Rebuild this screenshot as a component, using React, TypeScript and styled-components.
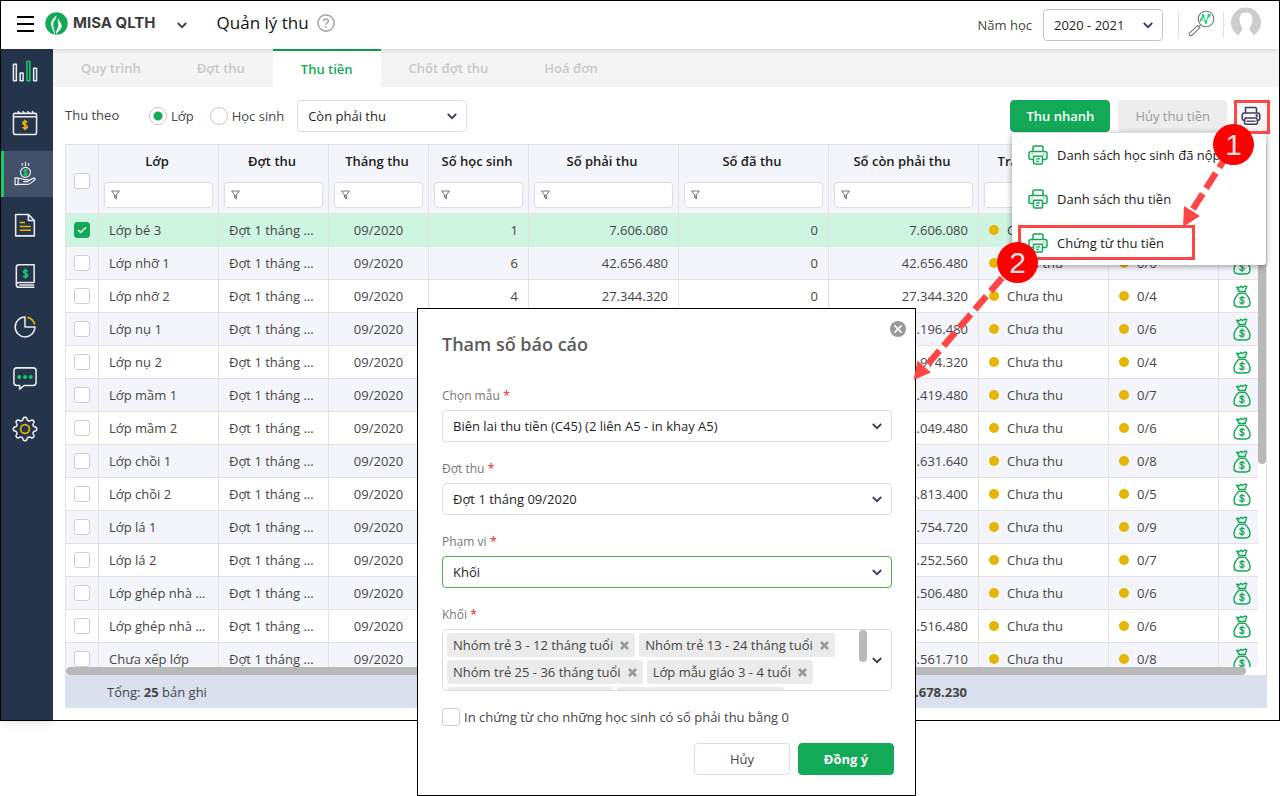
import React from "react";
import styled, { createGlobalStyle, css } from "styled-components";

const GREEN = "#12a957";
const GOLD = "#e5b500";
const RED = "#ff4646";
const LINE = "#e3e3e6";

const GlobalStyle = createGlobalStyle`
  *, *::before, *::after { box-sizing: border-box; }
  body { margin: 0; background: #fff; }
  body, button, input, select { font-family: "Open Sans", "Noto Sans", sans-serif; font-size: 13px; color: #454545; }
  button { cursor: pointer; }
`;

const Page = styled.div`
  position: relative;
  min-height: 796px;
`;

const AppFrame = styled.div`
  border: 1px solid #000;
  display: flex;
  flex-direction: column;
`;

const Header = styled.header`
  height: 48px;
  display: flex;
  align-items: center;
  background: #fff;
  position: relative;
  z-index: 1;
  box-shadow: 0 1px 6px rgba(0, 0, 0, 0.14);
  padding: 0 17px 4px 16px;
`;

const IconButton = styled.button`
  border: 0;
  padding: 0;
  background: none;
  display: flex;
  align-items: center;
  justify-content: center;
`;

const Brand = styled.a`
  display: flex;
  align-items: center;
  gap: 5px;
  margin-left: 11px;
  color: #3b3b3f;
  text-decoration: none;
  font: 700 15px/20px Inter, sans-serif;
`;

const BrandToggle = styled(IconButton)`
  width: 16px;
  height: 20px;
  margin: 3px 0 0 18px;
`;

const PageTitle = styled.h1`
  margin: 0 8px 0 27px;
  font-size: 17px;
  line-height: 24px;
  font-weight: 400;
  color: #111;
`;

const Spacer = styled.div`
  flex: 1;
`;

const YearLabel = styled.label`
  display: flex;
  align-items: center;
  gap: 11px;
  padding-top: 4px;
`;

const SelectBox = styled.div<{ $width?: string; $active?: boolean; $strong?: boolean }>`
  position: relative;
  width: ${(p) => p.$width ?? "100%"};
  height: 32px;
  svg { position: absolute; right: 9px; top: 11px; pointer-events: none; }
  select {
    appearance: none;
    width: 100%;
    height: 32px;
    padding: 0 28px 0 10px;
    border: 1px solid ${(p) => (p.$active ? "#4cb04f" : p.$strong ? "#c4c4c4" : "#dedede")};
    border-radius: 4px;
    background: #fff;
    color: #1f1f1f;
  }
`;

const Tools = styled.div`
  display: flex;
  align-items: center;
  margin-left: 15px;
`;

const ToolButton = styled(IconButton)`
  margin: 0 8px 0 9px;
`;

const AccountButton = styled(IconButton)`
  margin-left: 6px;
`;

const HeaderDivider = styled.span`
  width: 1px;
  height: 26px;
  background: #e2e2e2;
  margin-top: 4px;
`;

const Body = styled.div`
  display: flex;
`;

const Sidebar = styled.nav`
  width: 52px;
  background: #24344b;
  display: flex;
  flex-direction: column;
  gap: 5px;
  box-shadow: 0 0 10px rgba(0, 0, 0, 0.2);
`;

const SideLink = styled.a<{ $active?: boolean }>`
  height: 46px;
  display: flex;
  align-items: center;
  justify-content: center;
  padding-right: 7px;
  border-left: 3px solid ${(p) => (p.$active ? "#12cf63" : "transparent")};
  ${(p) => p.$active && css`background: #42506a;`}
`;

const Main = styled.main`
  flex: 1;
  min-width: 0;
  background: #fff;
`;

const Tabs = styled.div`
  display: flex;
  height: 38px;
  background: #f4f4f4;
`;

const Tab = styled.a<{ $active?: boolean }>`
  padding: 1px 28px 0;
  line-height: 36px;
  font-weight: 600;
  text-decoration: none;
  color: #c8c8c8;
  ${(p) =>
    p.$active &&
    css`
      padding-top: 0;
      color: ${GREEN};
      background: #fff;
      border-top: 2px solid ${GREEN};
    `}
`;

const Toolbar = styled.div`
  height: 57px;
  padding: 13px 12px 0;
  display: flex;
  align-items: flex-start;
`;

const ToolbarText = styled.span`
  width: 84px;
  line-height: 30px;
`;

const RadioLabel = styled.label`
  display: flex;
  align-items: center;
  gap: 4px;
  height: 32px;
  margin-right: 16px;
  input {
    appearance: none;
    width: 18px;
    height: 18px;
    margin: 0;
    border: 1px solid #c9c9c9;
    border-radius: 50%;
    background: #fff;
  }
  input:checked { background: radial-gradient(circle, ${GREEN} 4px, #fff 5px); }
  & + div { margin-left: -3px; }
`;

const Button = styled.button<{ $kind: "primary" | "muted" | "plain" }>`
  height: 32px;
  min-width: 100px;
  padding: 0 ${(p) => (p.$kind === "primary" ? 15 : 16)}px;
  border-radius: 4px;
  border: 1px solid ${(p) => (p.$kind === "primary" ? GREEN : p.$kind === "muted" ? "#ededed" : "#dedede")};
  background: ${(p) => (p.$kind === "primary" ? GREEN : p.$kind === "muted" ? "#ededed" : "#fff")};
  color: ${(p) => (p.$kind === "primary" ? "#fff" : p.$kind === "muted" ? "#9b9b9b" : "#454545")};
  font-weight: ${(p) => (p.$kind === "primary" ? 600 : 400)};
`;

const ToolbarActions = styled.div`
  display: flex;
  gap: 8px;
`;

const PrintButton = styled(IconButton)`
  width: 32px;
  height: 32px;
  border-radius: 4px;
  background: #f7f7fa;
`;

const Grid = styled.section`
  margin: 0 12px 12px;
`;

const GridView = styled.div`
  display: flex;
  border: 1px solid ${LINE};
  border-bottom: 0;
  height: 531px;
`;

const TableArea = styled.div`
  flex: 1;
  min-width: 0;
  display: flex;
  flex-direction: column;
`;

const TableClip = styled.div`
  flex: 1;
  min-height: 0;
  overflow: hidden;
`;

const HTrack = styled.div`
  height: 8px;
`;

const HThumb = styled.div`
  width: 99%;
  height: 8px;
  border-radius: 4px;
  background: #b9b9b9;
`;

const VTrack = styled.div`
  width: 8px;
  padding-top: 69px;
`;

const VThumb = styled.div`
  height: 250px;
  border-radius: 4px;
  background: #b9b9b9;
`;

const Table = styled.table`
  width: 100%;
  min-width: 1203px;
  table-layout: fixed;
  border-collapse: separate;
  border-spacing: 0;
  th, td {
    padding: 0 10px;
    border-right: 1px solid ${LINE};
    border-bottom: 1px solid ${LINE};
    font-weight: 400;
    white-space: nowrap;
    overflow: hidden;
    text-overflow: ellipsis;
  }
  th { height: 69px; padding: 6px 5px 5px; background: #f4f5fa; color: #1c1c1c; font-weight: 600; }
  th:first-child, td:first-child { padding: 0; text-align: center; }
  th:first-child { padding-top: 4px; }
  th:last-child, td:last-child { padding: 0; text-align: center; text-overflow: clip; }
`;

const Row = styled.tr<{ $selected?: boolean }>`
  height: 33px;
  background: #fff;
  &:nth-child(even) { background: #f4f5fa; }
  ${(p) => p.$selected && css`&& { background: #cdf5e1; }`}
`;

const Cell = styled.td<{ $align?: string }>`
  text-align: ${(p) => p.$align ?? "left"};
`;

const Check = styled.input<{ $size?: number }>`
  appearance: none;
  display: inline-block;
  vertical-align: middle;
  flex: none;
  width: ${(p) => p.$size ?? 16}px;
  height: ${(p) => p.$size ?? 16}px;
  margin: 0;
  border: 1px solid #cfcfcf;
  border-radius: 3px;
  background: #fff;
  &:checked { background: ${GREEN}; border-color: ${GREEN}; }
`;

const CheckWrap = styled.span`
  position: relative;
  display: flex;
  justify-content: center;
  svg { position: absolute; left: 50%; top: 50%; translate: -50% -50%; pointer-events: none; }
`;

const HeadCell = styled.div`
  display: flex;
  flex-direction: column;
  align-items: stretch;
  gap: 11px;
  text-align: center;
  line-height: 20px;
`;

const HeadTitle = styled.span`
  padding-right: 3px;
`;

const Filter = styled.span`
  display: flex;
  align-items: center;
  height: 26px;
  padding-left: 6px;
  border: 1px solid #dfdfe2;
  border-radius: 4px;
  background: #fff;
  input { flex: 1; min-width: 0; border: 0; outline: 0; background: none; padding: 0 4px; }
`;

const Status = styled.span`
  display: flex;
  align-items: center;
  gap: 8px;
  &::before { content: ""; width: 10px; height: 10px; border-radius: 50%; background: ${GOLD}; }
`;

const BagButton = styled(IconButton)`
  width: 46px;
  height: 31px;
`;

const Summary = styled.footer`
  height: 33px;
  background: #dae0ed;
  display: flex;
  align-items: center;
  padding-left: 42px;
  span { width: 586px; }
  strong { font-weight: 700; }
  > strong { width: 274px; text-align: right; }
`;

const Menu = styled.ul`
  position: absolute;
  top: 133px;
  right: 14px;
  z-index: 2;
  width: 254px;
  margin: 0;
  padding: 0;
  list-style: none;
  background: #fff;
  border-radius: 3px;
  box-shadow: 0 1px 6px rgba(0, 0, 0, 0.4);
`;

const MenuItem = styled.button`
  width: 100%;
  height: 44px;
  padding: 0 16px;
  border: 0;
  background: none;
  display: flex;
  align-items: center;
  gap: 9px;
  color: #1c1c1c;
  white-space: nowrap;
`;

const Dialog = styled.section`
  position: absolute;
  left: 417px;
  top: 308px;
  z-index: 3;
  width: 499px;
  padding: 22px 23px 20px 24px;
  border: 1px solid #000;
  background: #fff;
`;

const CloseButton = styled(IconButton)`
  position: absolute;
  top: 12px;
  right: 9px;
`;

const DialogTitle = styled.h2`
  margin: 0 0 29px;
  font-size: 18px;
  line-height: 26px;
  font-weight: 600;
  color: #5c5c5c;
`;

const Field = styled.div`
  margin-bottom: 17px;
  > label {
    display: block;
    height: 24px;
    line-height: 18px;
    font-size: 12px;
    color: #777;
  }
`;

const Required = styled.span`
  color: #f5222d;
  font-size: 13px;
`;

const TagBox = styled.div`
  height: 62px;
  border: 1px solid #dedede;
  border-radius: 4px;
  display: flex;
  overflow: hidden;
`;

const TagList = styled.div`
  flex: 1;
  display: flex;
  flex-wrap: wrap;
  align-content: flex-start;
  gap: 3px 4px;
  padding: 3px 4px;
`;

const Tag = styled.span`
  height: 24px;
  padding: 0 6px;
  display: flex;
  align-items: center;
  gap: 7px;
  background: #ebebeb;
  border-radius: 3px;
`;

const TagThumb = styled.div`
  width: 8px;
  height: 32px;
  border-radius: 4px;
  background: #b9b9b9;
`;

const TagToggle = styled(IconButton)`
  width: 24px;
  padding-right: 4px;
`;

const CheckLabel = styled.label`
  display: flex;
  align-items: center;
  gap: 4px;
  height: 18px;
`;

const DialogActions = styled.div`
  display: flex;
  justify-content: flex-end;
  gap: 8px;
  margin: 17px -2px 0 0;
  button { width: 96px; min-width: 0; }
  button:last-child { font-weight: 700; }
`;

const Highlight = styled.div<{ $box: "print" | "item" }>`
  position: absolute;
  z-index: 4;
  border: 3px solid ${RED};
  pointer-events: none;
  ${(p) =>
    p.$box === "print"
      ? css`top: 100px; right: 10px; width: 36px; height: 34px;`
      : css`top: 225px; right: 85px; width: 177px; height: 35px;`}
`;

const Arrows = styled.svg`
  position: absolute;
  top: 0;
  right: 0;
  z-index: 4;
  pointer-events: none;
`;

const Step = styled.div<{ $n: 1 | 2 }>`
  position: absolute;
  z-index: 5;
  width: 41px;
  height: 41px;
  border-radius: 50%;
  background: #fe0000;
  color: #e6e0e0;
  font: 30px/41px "Liberation Sans", Arial, sans-serif;
  text-align: center;
  ${(p) => (p.$n === 1 ? css`top: 124px; right: 26px;` : css`top: 242px; right: 242px;`)}
`;

const Chevron = () => (
  <svg width="12" height="10" viewBox="0 0 12 10" fill="none" stroke="#3f3d56" strokeWidth="1.8" aria-hidden>
    <path d="M1.8 3 L6 7.2 L10.2 3" />
  </svg>
);

const Funnel = () => (
  <svg width="9" height="10" viewBox="0 0 9 10" aria-hidden>
    <path d="M.6 1H8.4L5.5 4.8V8.8L3.5 7.4V4.8Z" fill="none" stroke="#66637a" strokeWidth=".9" />
    <path d="M4.8 4.6V8.6" stroke="#8a889a" />
  </svg>
);

const Tick = () => (
  <svg width="10" height="8" viewBox="0 0 10 8" fill="none" stroke="#fff" strokeWidth="1.4" aria-hidden>
    <path d="M1 4 L3.6 6.6 L9 1.2" />
  </svg>
);

const Printer = ({ color }: { color: string }) => (
  <svg width="20" height="20" viewBox="0 0 20 20" fill="none" stroke={color} strokeWidth="1.5" strokeLinejoin="round" aria-hidden>
    <path d="M5 6.5V2.2Q5 1 6.2 1H13.8Q15 1 15 2.2V6.5" />
    <path d="M5 14.5H3Q1 14.5 1 12.5V8.5Q1 6.5 3 6.5H17Q19 6.5 19 8.5V12.5Q19 14.5 17 14.5H15" />
    <path d="M5.5 11.2H14.5V18Q14.5 19 13.5 19H6.5Q5.5 19 5.5 18Z" />
    <path d="M8 13.8H12M8 16.3H11M3.5 9H4.8M15 9H16.5" strokeWidth="1.2" />
  </svg>
);

const PrinterDark = () => (
  <svg width="20" height="20" viewBox="0 0 20 20" fill="none" stroke="#3f3d56" strokeWidth="1.5" strokeLinejoin="round" aria-hidden>
    <path d="M4.5 7V2Q4.5 1.5 5 1.5H14.5L15.5 2.5V7" />
    <path d="M4 14.5H2.5L1.2 12.8V9.2Q1.2 7 3.4 7H16.6Q18.8 7 18.8 9.2V12.8L17.5 14.5H16" />
    <path d="M4.2 12H15.8L16.6 17L15.4 18.3H4.6L3.4 17Z" />
    <path d="M5.5 15.2H14.5" strokeWidth="1.3" />
    <circle cx="15.8" cy="9.6" r=".6" />
  </svg>
);

const Bag = () => (
  <svg width="18" height="23" viewBox="0 0 18 23" fill="none" stroke={GREEN} strokeWidth="1.4" strokeLinejoin="round" strokeLinecap="round" aria-hidden>
    <path d="M6 6.2 3.6 2.2 6.4 2.8 8 1.2 9.6 2.6 12 1 13.8 1.6 12 6.2" />
    <path d="M5.6 6.4H12.4M6 8.2C3 11 1 14 1 17.5C1 20.6 3 22 5.4 22H12.6C15 22 17 20.6 17 17.5C17 14 15 11 12 8.2Z" />
    <path d="M11.3 13.2C10.8 11.8 6.9 11.6 6.9 13.6C6.9 15.6 11.3 14.8 11.3 16.9C11.3 19 7.2 18.8 6.7 17.2M9 11V19.6" strokeWidth="1.2" />
  </svg>
);

const Logo = () => (
  <svg width="23" height="23" viewBox="0 0 23 23" aria-hidden>
    <circle cx="11.5" cy="11.5" r="11.2" fill={GREEN} />
    <path d="M11.4 3.6C7.2 7 5.6 9.8 6.2 13C6.6 16 8.6 18 9.2 22.2H9.9C9.8 17.4 7.6 14.4 8.4 11C9 8.6 11.4 7.2 11.4 3.6Z" fill="#fff" />
    <path d="M13.2 6C13.1 9.2 17.2 10.6 16.6 14.6C16 18.2 12.6 19 11.2 22.8C10.2 18.2 13.6 16.4 13.4 12.8C13.2 10.4 12.2 8.6 13.2 6Z" fill="#fff" />
  </svg>
);

const Help = () => (
  <svg width="18" height="18" viewBox="0 0 18 18" fill="none" stroke="#a9a9a9" strokeWidth="1.6" aria-hidden>
    <circle cx="9" cy="9" r="8.1" />
    <path d="M6.6 7.2C6.7 4.2 11.4 4.4 11.3 7.1C11.2 8.8 9.1 8.8 9.1 10.7M9.1 12V13.7" />
  </svg>
);

const Magnifier = () => (
  <svg width="27" height="27" viewBox="0 0 27 27" fill="none" stroke="#77777d" strokeWidth="1.1" aria-hidden>
    <circle cx="18" cy="9" r="7.8" />
    <path d="M12.6 14.8 10.8 16.6M9.4 15.6 1.6 23Q.6 24.4 1.8 25.4Q3 26.4 4.2 25.2L11.8 17.8Z" />
    <path d="M11.6 11.6 13.6 9 15 5.6 17.8 12.4 20.4 6.4 22.4 5" stroke="#1fd277" strokeWidth="1.4" strokeDasharray="3 .6" />
    <g fill="#1fd277" stroke="none">
      <circle cx="13.4" cy="9.2" r="1.2" /><circle cx="15" cy="5.2" r="1.2" /><circle cx="18" cy="12.6" r="1.3" /><circle cx="21" cy="5.4" r="1.6" />
    </g>
  </svg>
);

const Avatar = () => (
  <svg width="32" height="32" viewBox="0 0 32 32" aria-hidden>
    <circle cx="16" cy="15.5" r="15" fill="#cdcdcd" />
    <path d="M16 5.5C20.8 5.5 22.8 8.8 22.4 13.2C22.2 17 20.6 19 19.8 20.6C19.2 22.4 19.8 23.8 21.4 25L23.6 28.4C19 32.6 13 32.6 8.4 28.4L10.6 25C12.2 23.8 12.8 22.4 12.2 20.6C11.4 19 9.8 17 9.6 13.2C9.2 8.8 11.2 5.5 16 5.5Z" fill="#fff" />
    <path d="M10.8 26.6 Q9 28.4 8 31H24Q23 28.4 21.2 26.6Z" fill="#fff" />
  </svg>
);

const W = "#e9ecf0";
const G = "#12cf63";

/* Outline of a cog: eight rounded teeth around the centre of a 27px box. */
const cogPoints = Array.from({ length: 96 }, (_, i) => {
  const angle = (i / 96) * Math.PI * 2;
  const wave = Math.cos(8 * angle);
  const radius = 10.7 + 1.5 * Math.sign(wave) * Math.sqrt(Math.abs(wave));
  return `${(13.5 + radius * Math.cos(angle)).toFixed(2)},${(13.5 + radius * Math.sin(angle)).toFixed(2)}`;
}).join(" ");

const sideIcons: { label: string; art: React.ReactNode }[] = [
  { label: "Tổng quan", art: (
    <>
      <path d="M1.5 5.5H4.5V22.5H1.5ZM8.5 14.5H11.5V22.5H8.5ZM22.5 9.5H25.5V22.5H22.5Z" />
      <path d="M15.5 2.5H18.5V22.5H15.5Z" stroke={G} />
    </>
  ) },
  { label: "Đợt thu", art: (
    <>
      <path d="M3 3.5H24Q25.5 3.5 25.5 5V23Q25.5 25.5 23 25.5H4Q1.5 25.5 1.5 23V5Q1.5 3.5 3 3.5ZM1.5 7H25.5" />
      <path d="M6 1.2 8.4 3.8M11 1.2 13.4 3.8M16 1.2 18.4 3.8M21 1.2 22.4 3.8" />
      <path d="M15.8 13C15.4 11.2 11.2 11.2 11.2 13.4C11.2 15.8 15.9 14.8 15.9 17.4C15.9 19.6 11.5 19.6 11.1 17.6M13.5 10V21" stroke="#f0b400" />
    </>
  ) },
  { label: "Thu tiền", art: (
    <>
      <circle cx="14" cy="11.8" r="5.2" strokeWidth="1.3" />
      <path d="M15.6 10.2C15.2 8.6 12.4 8.8 12.5 10.4C12.6 12 15.6 11.6 15.6 13.4C15.6 15 12.6 15 12.3 13.6M14 8V15.8" stroke={G} strokeWidth="1.5" />
      <path d="M14 .8V5.2M10.8 2.2V5M17.2 2.2V5" strokeWidth="1.2" />
      <path d="M3.2 17.5H6.4V24.5H3.2ZM6.4 18.4C9.4 17.2 11 18.2 12.4 19.4H16C17.4 19.8 17 21.4 15.8 21.4H11.8M17 20.4 22.4 17.8C24 17.4 24.6 18.8 23.4 19.8C20.6 22 19 24 16.4 24.4H6.4" strokeWidth="1.3" />
    </>
  ) },
  { label: "Chứng từ", art: (
    <>
      <path d="M3.8 2.5H17L23.2 8.8V24.8H3.8Z M17 2.5V8.8H23.2" />
      <path d="M8 11H13.5M8 15H19.5M8 19H19.5" stroke="#f0b400" />
    </>
  ) },
  { label: "Sổ sách", art: (
    <>
      <path d="M23 20.5V1.8H7Q4.5 1.8 4.5 4.3V22.5Q4.5 25.2 7 25.2H23.2M4.5 22.5Q4.8 20.2 7 20.2H23.2M7.5 22.8H23" />
      <path d="M16.2 8.8C15.8 7 12 7 12 9.2C12 11.4 16.3 10.4 16.3 12.8C16.3 15 12.2 15 11.8 13.2M14 5.8V16.2" stroke={G} />
    </>
  ) },
  { label: "Báo cáo", art: (
    <>
      <path d="M13.5 3.2A10.3 10.3 0 1 0 23.9 13.6H13.5Z" />
      <path d="M16 3.3A10.6 10.6 0 0 1 23.6 11" stroke="#f0b400" />
    </>
  ) },
  { label: "Tin nhắn", art: (
    <>
      <path d="M5 3H22Q25 3 25 6V18Q25 21.3 22 21.3H12.6L8 25V21.3H5Q2 21.3 2 18V6Q2 3 5 3Z" />
      <g fill={G} stroke="none">
        <circle cx="7.5" cy="12.5" r="2.1" /><circle cx="13.5" cy="12.5" r="2.1" /><circle cx="19.5" cy="12.5" r="2.1" />
      </g>
    </>
  ) },
  { label: "Thiết lập", art: (
    <>
      <polygon points={cogPoints} />
      <circle cx="13.5" cy="13.5" r="4.6" stroke="#e3b100" strokeWidth="1.8" />
    </>
  ) },
];

const columns: { title: string; width: number; plain?: boolean }[] = [
  { title: "Lớp", width: 120 },
  { title: "Đợt thu", width: 110 },
  { title: "Tháng thu", width: 100 },
  { title: "Số học sinh", width: 100 },
  { title: "Số phải thu", width: 150 },
  { title: "Số đã thu", width: 150 },
  { title: "Số còn phải thu", width: 150 },
  { title: "Trạng thái thu", width: 130, plain: true },
  { title: "Đã thu", width: 110, plain: true },
];

const rows: [string, number, string][] = [
  ["Lớp bé 3", 1, "7.606.080"],
  ["Lớp nhỡ 1", 6, "42.656.480"],
  ["Lớp nhỡ 2", 4, "27.344.320"],
  ["Lớp nụ 1", 6, "41.196.480"],
  ["Lớp nụ 2", 4, "27.974.320"],
  ["Lớp mầm 1", 7, "42.419.480"],
  ["Lớp mầm 2", 6, "42.049.480"],
  ["Lớp chồi 1", 8, "56.631.640"],
  ["Lớp chồi 2", 5, "34.813.400"],
  ["Lớp lá 1", 9, "62.754.720"],
  ["Lớp lá 2", 7, "49.252.560"],
  ["Lớp ghép nhà trẻ 1", 6, "41.506.480"],
  ["Lớp ghép nhà trẻ 2", 6, "41.516.480"],
  ["Chưa xếp lớp", 8, "54.561.710"],
];

const tags = [
  "Nhóm trẻ 3 - 12 tháng tuổi",
  "Nhóm trẻ 13 - 24 tháng tuổi",
  "Nhóm trẻ 25 - 36 tháng tuổi",
  "Lớp mẫu giáo 3 - 4 tuổi",
  "Lớp mẫu giáo 4 - 5 tuổi",
  "Lớp mẫu giáo 5 - 6 tuổi",
];

const fields = [
  { id: "template", label: "Chọn mẫu", value: "Biên lai thu tiền (C45) (2 liên A5 - in khay A5)" },
  { id: "period", label: "Đợt thu", value: "Đợt 1 tháng 09/2020" },
  { id: "scope", label: "Phạm vi", value: "Khối", active: true },
];

export default function App() {
  return (
    <Page>
      <GlobalStyle />
      <AppFrame>
        <Header>
          <IconButton aria-label="Mở menu">
            <svg width="17" height="18" viewBox="0 0 17 18" stroke="#000" strokeWidth="2" aria-hidden>
              <path d="M0 3H17M0 10H17M0 17H17" />
            </svg>
          </IconButton>
          <Brand href="#home"><Logo />MISA QLTH</Brand>
          <BrandToggle aria-label="Chọn ứng dụng"><Chevron /></BrandToggle>
          <PageTitle>Quản lý thu</PageTitle>
          <IconButton aria-label="Trợ giúp"><Help /></IconButton>
          <Spacer />
          <YearLabel>
            Năm học
            <SelectBox $width="120px" $strong>
              <select defaultValue="y"><option value="y">2020 - 2021</option></select>
              <Chevron />
            </SelectBox>
          </YearLabel>
          <Tools>
            <HeaderDivider />
            <ToolButton aria-label="Tìm kiếm"><Magnifier /></ToolButton>
            <HeaderDivider />
            <AccountButton aria-label="Tài khoản"><Avatar /></AccountButton>
          </Tools>
        </Header>
        <Body>
          <Sidebar>
            {sideIcons.map((item, i) => (
              <SideLink key={item.label} href={`#m${i}`} aria-label={item.label} $active={i === 2}>
                <svg width="26" height="26" viewBox="0 0 27 27" fill="none" stroke={W} strokeWidth="1.6" strokeLinejoin="round">{item.art}</svg>
              </SideLink>
            ))}
          </Sidebar>
          <Main>
            <Tabs>
              {["Quy trình", "Đợt thu", "Thu tiền", "Chốt đợt thu", "Hoá đơn"].map((t, i) => (
                <Tab key={t} href={`#t${i}`} $active={i === 2}>{t}</Tab>
              ))}
            </Tabs>
            <Toolbar>
              <ToolbarText>Thu theo</ToolbarText>
              <RadioLabel><input type="radio" name="by" defaultChecked />Lớp</RadioLabel>
              <RadioLabel><input type="radio" name="by" />Học sinh</RadioLabel>
              <SelectBox $width="170px">
                <select aria-label="Trạng thái thu" defaultValue="a"><option value="a">Còn phải thu</option></select>
                <Chevron />
              </SelectBox>
              <Spacer />
              <ToolbarActions>
                <Button $kind="primary">Thu nhanh</Button>
                <Button $kind="muted">Hủy thu tiền</Button>
                <PrintButton aria-label="In"><PrinterDark /></PrintButton>
              </ToolbarActions>
            </Toolbar>
            <Grid>
              <GridView>
                <TableArea>
                  <TableClip>
                    <Table>
                      <colgroup>
                        <col width={33} />
                        {columns.map((c) => <col key={c.title} width={c.width} />)}
                        <col width={50} />
                      </colgroup>
                      <thead>
                        <tr>
                          <th><CheckWrap><Check type="checkbox" aria-label="Chọn tất cả" /></CheckWrap></th>
                          {columns.map((c) => (
                            <th key={c.title}>
                              <HeadCell>
                                <HeadTitle>{c.title}</HeadTitle>
                                <Filter>{!c.plain && <Funnel />}<input aria-label={`Lọc ${c.title}`} /></Filter>
                              </HeadCell>
                            </th>
                          ))}
                          <th />
                        </tr>
                      </thead>
                      <tbody>
                        {rows.map(([name, n, money], i) => (
                          <Row key={name} $selected={i === 0}>
                            <Cell>
                              <CheckWrap>
                                <Check type="checkbox" aria-label={name} defaultChecked={i === 0} />
                                {i === 0 && <Tick />}
                              </CheckWrap>
                            </Cell>
                            <Cell>{name}</Cell>
                            <Cell>Đợt 1 tháng 09/2020</Cell>
                            <Cell $align="center">09/2020</Cell>
                            <Cell $align="right">{n}</Cell>
                            <Cell $align="right">{money}</Cell>
                            <Cell $align="right">0</Cell>
                            <Cell $align="right">{money}</Cell>
                            <Cell><Status>Chưa thu</Status></Cell>
                            <Cell><Status>0/{n}</Status></Cell>
                            <Cell><BagButton aria-label={`Thu tiền ${name}`}><Bag /></BagButton></Cell>
                          </Row>
                        ))}
                      </tbody>
                    </Table>
                  </TableClip>
                  <HTrack><HThumb /></HTrack>
                </TableArea>
                <VTrack><VThumb /></VTrack>
              </GridView>
              <Summary>
                <span>Tổng: <strong>25</strong> bản ghi</span>
                <strong>852.678.230</strong>
              </Summary>
            </Grid>
          </Main>
        </Body>
      </AppFrame>

      <Menu>
        {["Danh sách học sinh đã nộp", "Danh sách thu tiền", "Chứng từ thu tiền"].map((m) => (
          <li key={m}><MenuItem><Printer color={GREEN} />{m}</MenuItem></li>
        ))}
      </Menu>

      <Dialog role="dialog" aria-labelledby="dialog-title">
        <CloseButton aria-label="Đóng">
          <svg width="16" height="16" viewBox="0 0 16 16" aria-hidden>
            <circle cx="8" cy="8" r="8" fill="#999" />
            <path d="M4.4 4.4 11.6 11.6M11.6 4.4 4.4 11.6" stroke="#fff" strokeWidth="1.5" />
          </svg>
        </CloseButton>
        <DialogTitle id="dialog-title">Tham số báo cáo</DialogTitle>
        {fields.map((f) => (
          <Field key={f.id}>
            <label htmlFor={f.id}>{f.label} <Required>*</Required></label>
            <SelectBox $active={f.active}>
              <select id={f.id}><option>{f.value}</option></select>
              <Chevron />
            </SelectBox>
          </Field>
        ))}
        <Field>
          <label htmlFor="grades">Khối <Required>*</Required></label>
          <TagBox>
            <TagList>
              {tags.map((t) => (
                <Tag key={t}>
                  {t}
                  <IconButton aria-label={`Bỏ ${t}`}>
                    <svg width="9" height="9" viewBox="0 0 9 9" stroke="#999" strokeWidth="2.6" aria-hidden>
                      <path d="M1 1 8 8M8 1 1 8" />
                    </svg>
                  </IconButton>
                </Tag>
              ))}
            </TagList>
            <TagThumb />
            <TagToggle id="grades" aria-label="Mở danh sách khối"><Chevron /></TagToggle>
          </TagBox>
        </Field>
        <CheckLabel>
          <Check type="checkbox" $size={18} />
          In chứng từ cho những học sinh có số phải thu bằng 0
        </CheckLabel>
        <DialogActions>
          <Button $kind="plain">Hủy</Button>
          <Button $kind="primary">Đồng ý</Button>
        </DialogActions>
      </Dialog>

      <Highlight $box="print" />
      <Highlight $box="item" />
      <Arrows width="380" height="400" viewBox="900 0 380 400" fill={RED} stroke="none" aria-hidden>
        <path d="M1193 209 1226 157" stroke={RED} strokeWidth="6.5" strokeDasharray="18 6.5" />
        <path d="M1183 227 1184 206 1200 216Z" />
        <path d="M928 364 1008 271" stroke={RED} strokeWidth="6.5" strokeDasharray="17.5 6.5" />
        <path d="M913.5 380 917.5 360.5 931 372.5Z" />
      </Arrows>
      <Step $n={1}>1</Step>
      <Step $n={2}>2</Step>
    </Page>
  );
}
